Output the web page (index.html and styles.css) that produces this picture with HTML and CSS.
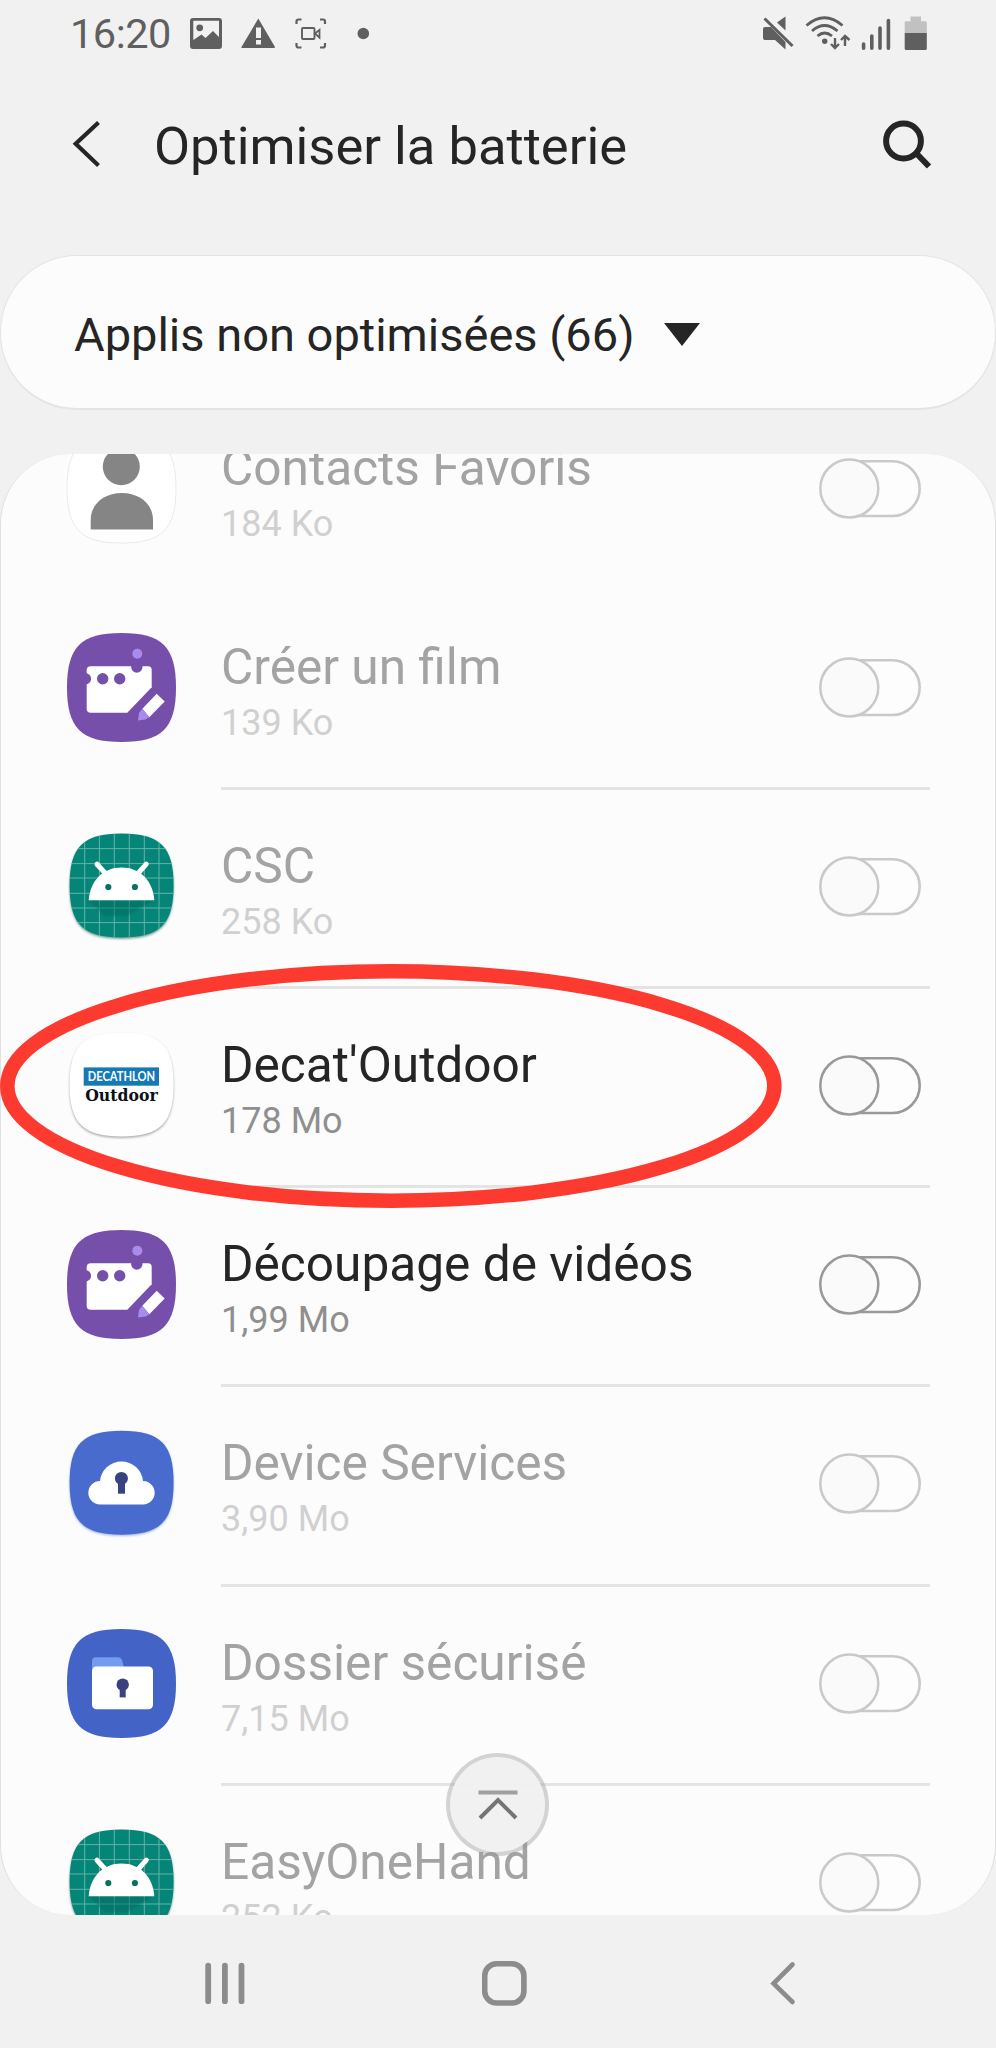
FILE: index.html
```html
<!DOCTYPE html>
<html lang="fr">
<head>
<meta charset="utf-8">
<title>Optimiser la batterie</title>
<link rel="stylesheet" href="styles.css">
</head>
<body>
<svg class="defs" width="0" height="0" aria-hidden="true">
  <defs>
    <path id="squircle" d="M54.5 0C95 0 109 14 109 54.5S95 109 54.5 109S0 95 0 54.5S14 0 54.5 0Z"/>
    <clipPath id="small-clip"><use href="#squircle" transform="translate(2.6 1.5) scale(.954)"/></clipPath>
    <filter id="soft" x="-10%" y="-10%" width="120%" height="120%"><feGaussianBlur stdDeviation="1"/></filter>
    <symbol id="switch" viewBox="0 0 102 61">
      <rect x="14" y="3.200" width="86.700" height="54.800" rx="27.400" fill="#fdfdfd" stroke="currentColor" stroke-width="2.600"/>
      <circle cx="30.300" cy="30.500" r="29" fill="#fafafa" stroke="currentColor" stroke-width="2.500"/>
    </symbol>
    <symbol id="film" viewBox="0 0 109 109">
      <use href="#squircle" fill="#764fab"/>
      <path fill="#fff" d="M23.7 33.2H81a3.7 3.7 0 0 1 3.7 3.7V54.2L60.3 79.8H23.7a4 4 0 0 1-4-4V37.2a4 4 0 0 1 4-4Z"/>
      <g fill="#764fab"><circle cx="69.8" cy="34" r="5.7"/><circle cx="35.7" cy="45.8" r="5.7"/><circle cx="52.7" cy="45.8" r="5.7"/><circle cx="18.4" cy="45.8" r="5.7"/></g>
      <circle cx="70.3" cy="20.8" r="5" fill="#a98bee"/>
      <path fill="#fff" d="M89.7 60.8L97.7 68.5L82.3 84.2L75.3 75.8Z"/>
      <path fill="#a98bee" d="M75.3 75.8L82.3 84.2L78.5 86.5L71 87.5L72 80Z"/>
    </symbol>
    <symbol id="android" viewBox="0 0 109 109">
      <use href="#squircle" transform="translate(2.6 3) scale(.954)" fill="#7aa49d" filter="url(#soft)"/>
      <g clip-path="url(#small-clip)">
        <rect width="109" height="109" fill="#048577"/>
        <path stroke="#63b3a9" stroke-width="1" d="M17.7 0V109M32.4 0V109M47.3 0V109M62.3 0V109M77.3 0V109M92 0V109M0 16.6H109M0 31.6H109M0 46H109M0 61.3H109M0 76H109M0 90.6H109"/>
        <path fill="#036c60" opacity=".5" d="M22 68.3H87L60 84L38 84Z" filter="url(#soft)"/>
      </g>
      <path fill="#fff" d="M21.7 68.3C23 49 36 35.6 54.5 35.6S86 49 87.3 68.3Z"/>
      <path stroke="#fff" stroke-width="5" stroke-linecap="round" d="M30 32.2L39 42M79.3 32.2L70.5 42"/>
      <circle cx="41.3" cy="55" r="3.1" fill="#07705f"/><circle cx="67.9" cy="55" r="3.1" fill="#07705f"/>
    </symbol>
  </defs>
</svg>

<div class="screen">
  <header class="status">
    <span class="time">16:20</span>
    <svg class="status-left" viewBox="180 10 200 48" width="200" height="48">
      <g fill="#5f5f5f">
        <path fill-rule="evenodd" d="M193 18H219a3 3 0 0 1 3 3V46a3 3 0 0 1-3 3H193a3 3 0 0 1-3-3V21a3 3 0 0 1 3-3ZM193.300 20.800V40L201.500 34.500L205.500 38L213 31L219 37V20.800Z"/>
        <circle cx="199.700" cy="27.800" r="3.400"/>
        <path d="M258.300 18.500L275 47Q275 48 274 48H242Q241 48 241.500 47Z"/>
        <circle cx="363.300" cy="33.500" r="5.800"/>
      </g>
      <path fill="#f1f1f1" d="M256 27.500H261V38H256ZM256 40H261V44.500H256Z"/>
      <g fill="none" stroke="#5f5f5f" stroke-width="2.200">
        <path d="M296.500 24V21.500Q296.500 19.500 298.500 19.500H301.500M320 19.500H323Q325 19.500 325 21.500V24M325 43V45.500Q325 47.500 323 47.500H320M301.500 47.500H298.500Q296.500 47.500 296.500 45.500V43"/>
        <rect x="302" y="28" width="12.500" height="11" rx="1" stroke-width="1.900"/>
        <path stroke-width="1.800" d="M315 33.500L319.500 29.800V37.600Z"/>
      </g>
    </svg>
    <svg class="status-right" viewBox="760 10 172 48" width="172" height="48">
      <path fill="#5f5f5f" d="M777 22.500L785.500 16.500V30.500ZM765 27H771L785.500 42V49.500L775 40H765Q763 40 763 38V29Q763 27 765 27Z"/>
      <path stroke="#f1f1f1" stroke-width="2.200" d="M768 16.500L795 43.500"/>
      <path stroke="#5f5f5f" stroke-width="3" d="M764.500 18.500L792.500 46"/>
      <g fill="none" stroke="#5f5f5f" stroke-width="2.800">
        <path d="M806.500 25.500Q824.500 10 842.500 25.500M812 31Q824.500 20 837.500 31M817.500 36Q824.500 30 832 36"/>
        <path stroke-width="2.400" d="M835 38V48M831 44L835 48L839 44M845 46V36M841 40L845 36L849.500 40"/>
      </g>
      <circle cx="824.700" cy="41.300" r="2.700" fill="#5f5f5f"/>
      <path stroke="#5f5f5f" stroke-width="3.600" stroke-linecap="round" d="M863.600 44V48.200M871.800 36V48.200M880 28V48.200M888.400 20.500V48.200"/>
      <path fill="#c1c1c1" d="M910.500 16.500H921V21.200H925.500Q926.800 21.200 926.800 22.500V33H904.700V22.500Q904.700 21.200 906 21.200H910.500Z"/>
      <path fill="#5f5f5f" d="M904.700 33H926.800V48.500Q926.800 50 925.300 50H906.200Q904.700 50 904.700 48.500Z"/>
    </svg>
  </header>

  <div class="appbar">
    <svg viewBox="0 0 36 52" width="36" height="52"><path d="M31.500 4.500L8.700 25.800L31.500 47.500" fill="none" stroke="#252525" stroke-width="4.200"/></svg>
    <h1>Optimiser la batterie</h1>
    <svg viewBox="880 116 54 54" width="54" height="54"><g fill="none" stroke="#252525" stroke-width="6"><circle cx="903.500" cy="140" r="17.400"/><path d="M916 152L929 165.500"/></g></svg>
  </div>

  <div class="filter">
    <span>Applis non optimisées (66)</span>
    <svg viewBox="0 0 36 23" width="36" height="23"><path fill="#252525" d="M0 0H36L18 23Z"/></svg>
  </div>

  <main class="card">
    <ul class="apps">
      <li class="app off">
        <svg class="icon" viewBox="0 0 109 109"><use href="#squircle" fill="#fff" stroke="#e9e9e9"/><circle cx="54.300" cy="32.700" r="18.500" fill="#858585"/><path fill="#858585" d="M23.700 95.400V86C23.700 70 37 59 54.800 59S86 70 86 86V95.400Z"/></svg>
        <div class="body last"><div class="text"><b>Contacts Favoris</b><small>184 Ko</small></div><svg class="switch"><use href="#switch"/></svg></div>
      </li>
      <li class="app off">
        <svg class="icon"><use href="#film"/></svg>
        <div class="body"><div class="text"><b>Créer un film</b><small>139 Ko</small></div><svg class="switch"><use href="#switch"/></svg></div>
      </li>
      <li class="app off">
        <svg class="icon"><use href="#android"/></svg>
        <div class="body"><div class="text"><b>CSC</b><small>258 Ko</small></div><svg class="switch"><use href="#switch"/></svg></div>
      </li>
      <li class="app">
        <svg class="icon" viewBox="0 0 109 109">
          <use href="#squircle" transform="translate(2.600 3) scale(.954)" fill="#aaa" filter="url(#soft)"/>
          <use href="#squircle" transform="translate(2.600 1.500) scale(.954)" fill="#fff"/>
          <rect x="16.700" y="36.400" width="75.300" height="18.300" fill="#1479b4"/>
          <text class="logo-top" x="20.700" y="50.400" textLength="67.500" lengthAdjust="spacingAndGlyphs">DECATHLON</text>
          <text class="logo-sub" x="18.200" y="70" textLength="72.500" lengthAdjust="spacingAndGlyphs">Outdoor</text>
        </svg>
        <div class="body"><div class="text"><b>Decat'Outdoor</b><small>178 Mo</small></div><svg class="switch"><use href="#switch"/></svg></div>
      </li>
      <li class="app">
        <svg class="icon"><use href="#film"/></svg>
        <div class="body"><div class="text"><b>Découpage de vidéos</b><small>1,99 Mo</small></div><svg class="switch"><use href="#switch"/></svg></div>
      </li>
      <li class="app off">
        <svg class="icon" viewBox="0 0 109 109">
          <use href="#squircle" transform="translate(2.600 3) scale(.954)" fill="#a9bbea" filter="url(#soft)"/>
          <use href="#squircle" transform="translate(2.600 1.700) scale(.954)" fill="#496bcd"/>
          <path fill="#fff" d="M33 75.400a11.700 11.700 0 0 1 0-23.400A21.600 21.600 0 0 1 76 52a11.700 11.700 0 0 1 0 23.400Z"/>
          <circle cx="54.400" cy="49.400" r="6.500" fill="#37447f"/><path fill="#37447f" d="M51 50H58V64.700H51Z"/>
        </svg>
        <div class="body"><div class="text"><b>Device Services</b><small>3,90 Mo</small></div><svg class="switch"><use href="#switch"/></svg></div>
      </li>
      <li class="app off">
        <svg class="icon" viewBox="0 0 109 109">
          <use href="#squircle" fill="#4463c6"/>
          <path fill="#739bee" d="M25 42V32.200a4 4 0 0 1 4-4H51Q54.500 28.200 55.300 32L57 38.500V42Z"/>
          <rect x="25" y="37.500" width="61" height="42.800" rx="4.500" fill="#fff"/>
          <circle cx="55.700" cy="55.700" r="6.200" fill="#39427e"/><path fill="#39427e" d="M52.700 56H58.700V68.400H52.700Z"/>
        </svg>
        <div class="body"><div class="text"><b>Dossier sécurisé</b><small>7,15 Mo</small></div><svg class="switch"><use href="#switch"/></svg></div>
      </li>
      <li class="app off">
        <svg class="icon"><use href="#android"/></svg>
        <div class="body"><div class="text"><b>EasyOneHand</b><small>252 Ko</small></div><svg class="switch"><use href="#switch"/></svg></div>
      </li>
    </ul>
  </main>

  <nav class="nav">
    <svg viewBox="200 1956 50 54" width="50" height="54"><path stroke="#8c8c8c" stroke-width="5.800" stroke-linecap="round" d="M208.200 1965.600V2001.200M224.900 1965.600V2001.200M241.500 1965.600V2001.200"/></svg>
    <svg viewBox="481 1956 52 54" width="52" height="54"><rect x="483.700" y="1963.800" width="39.200" height="39.200" rx="12" fill="none" stroke="#8c8c8c" stroke-width="5.600"/></svg>
    <svg viewBox="766 1956 34 54" width="34" height="54"><path d="M792.500 1964.500L773.500 1983.500L792.500 2002" fill="none" stroke="#8c8c8c" stroke-width="4.600" stroke-linecap="round"/></svg>
  </nav>

  <svg class="highlight" viewBox="0 0 784 248"><ellipse cx="390.800" cy="124" rx="383.500" ry="114.700" fill="none" stroke="#fc3a30" stroke-width="14.600"/></svg>
  <button class="to-top" aria-label="Haut de page"><svg viewBox="0 0 44 32" width="44" height="32"><path stroke="#a0a0a0" stroke-width="4" d="M2.500 3.500H41.500"/><path fill="none" stroke="#757575" stroke-width="4" d="M4 29L22 11L40 29"/></svg></button>
</div>
</body>
</html>
```
FILE: styles.css
```css
* { box-sizing: border-box; }
body {
  margin: 0;
  background: #f1f1f1;
  color: #252525;
  font-family: Roboto, "Liberation Sans", sans-serif;
}
svg { display: block; flex: none; }
.defs { position: absolute; }
.screen {
  position: relative;
  width: 996px;
  height: 2048px;
  overflow: hidden;
  display: flex;
  flex-direction: column;
}
.status {
  height: 68px;
  flex: none;
  display: flex;
  align-items: center;
  padding: 0 64px 0 70px;
}
.time {
  width: 110px;
  font-size: 41.500px;
  line-height: 48px;
  color: #5f5f5f;
  letter-spacing: -.500px;
}
.status-right { margin-left: auto; }
.appbar {
  height: 187px;
  flex: none;
  display: flex;
  align-items: center;
  padding: 0 62px 36px 67px;
}
.appbar h1 {
  flex: 1;
  margin: 5px 0 0 51px;
  font-size: 52.500px;
  font-weight: 400;
  white-space: nowrap;
}
.filter {
  height: 155px;
  flex: none;
  border: 1px solid #e4e4e4;
  border-bottom-width: 2px;
  border-radius: 77px;
  background: #fcfcfc;
  display: flex;
  align-items: center;
  gap: 29px;
  padding: 5px 0 0 73px;
  font-size: 47px;
}
.card {
  height: 1461px;
  flex: none;
  margin-top: 44px;
  background: #fcfcfc;
  border: solid #e0e0e0;
  border-width: 0 1px;
  border-radius: 70px;
  overflow: hidden;
}
.apps {
  list-style: none;
  margin: -62.600px 0 0;
  padding: 0;
}
.app {
  height: 199.200px;
  display: flex;
  align-items: center;
  padding: 0 65px 0 66px;
}
.icon { width: 109px; height: 109px; margin: 0 45px 6px 0; overflow: visible; }
.body {
  flex: 1;
  height: 100%;
  display: flex;
  align-items: center;
  justify-content: space-between;
  padding: 0 9px 0 0;
  border-bottom: 3px solid #e4e4e4;
}
.body.last { border-color: transparent; }
.text { display: flex; flex-direction: column; margin-top: 8px; }
.text b { font-size: 49.600px; line-height: 60px; font-weight: 400; white-space: nowrap; }
.text small { font-size: 36px; line-height: 52px; color: #8f8f8f; }
.off b { color: #a3a3a3; }
.off small { color: #d0d0d0; }
.switch { width: 102px; height: 61px; margin-bottom: 3px; color: #999; }
.off .switch { color: #c9c9c9; }
.logo-top { font: 700 14px Lato, sans-serif; fill: #fff; }
.logo-sub { font: 700 17px "DejaVu Serif", serif; fill: #0b0f16; }
.nav {
  flex: 1;
  display: flex;
  justify-content: space-between;
  align-items: center;
  padding: 3px 196px 0 200px;
}
.highlight { position: absolute; left: 0; top: 962px; width: 784px; height: 248px; }
.to-top {
  position: absolute;
  left: 446px;
  top: 1753px;
  width: 103px;
  height: 103px;
  border: 4px solid rgba(150, 150, 150, .4);
  border-radius: 50%;
  background: rgba(240, 240, 240, .95);
  background-clip: padding-box;
  padding: 0;
  display: grid;
  place-items: center;
}
```
